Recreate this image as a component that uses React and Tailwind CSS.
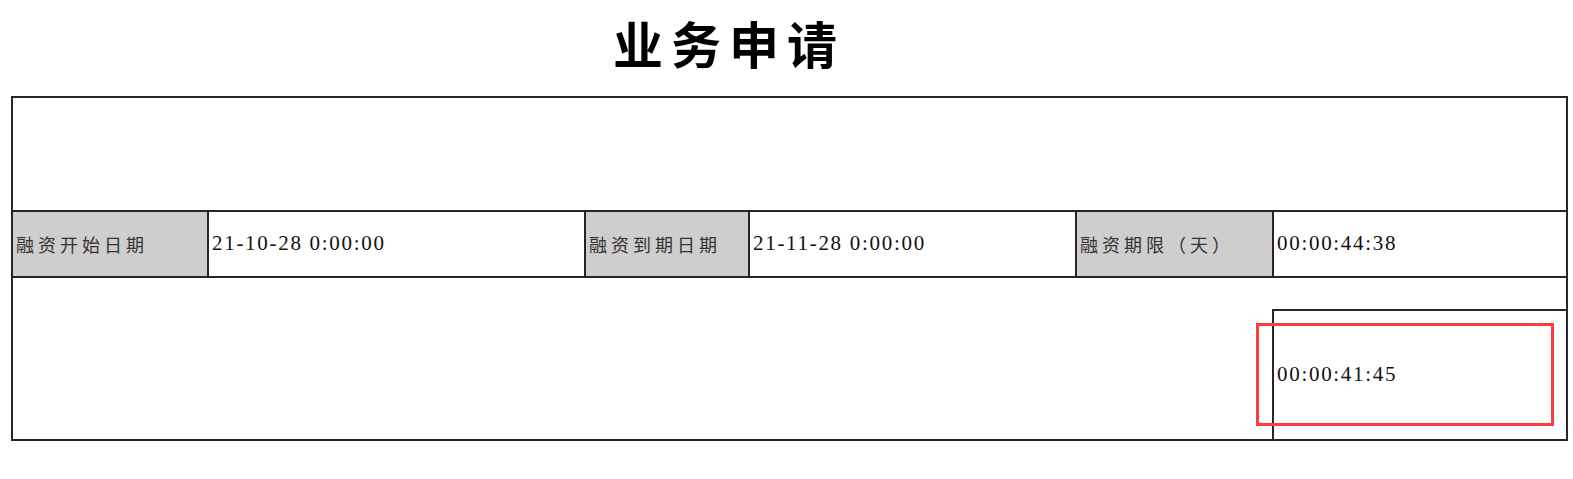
export default function App() {
  const label =
    "h-full flex items-center pl-[3px] bg-[#cfcdcd] text-[18px] tracking-[4px] text-[#333] whitespace-nowrap font-['Noto_Sans_CJK_SC','Noto_Sans',sans-serif]";
  const value =
    "h-full flex items-center pl-[3px] text-[21px] tracking-[1.7px] text-[#111] whitespace-nowrap font-['Liberation_Serif','Noto_Sans_CJK_SC',serif]";
  return (
    <div className="w-[1573px] h-[479px] bg-white relative overflow-hidden">
      <div className="h-[96px] pb-[12px] flex items-center pl-[613px]">
        <h1 className="text-[50px] leading-none font-semibold tracking-[8px] text-black font-['Noto_Sans_CJK_SC',sans-serif]">
          业务申请
        </h1>
      </div>
      <div className="ml-[11px] w-[1557px] h-[345px] border-2 border-[#262626] flex flex-col">
        <div className="h-[114px] border-b-2 border-[#262626]"></div>
        <div className="h-[66px] border-b-2 border-[#262626] flex">
          <div className={`w-[194px] ${label}`}>融资开始日期</div>
          <div className={`w-[377px] border-l-2 border-[#262626] ${value}`}>21-10-28 0:00:00</div>
          <div className={`w-[164px] border-l-2 border-[#262626] ${label}`}>融资到期日期</div>
          <div className={`w-[327px] border-l-2 border-[#262626] ${value}`}>21-11-28 0:00:00</div>
          <div className={`w-[197px] border-l-2 border-[#262626] ${label}`}>融资期限（天）</div>
          <div className={`flex-1 border-l-2 border-[#262626] ${value}`}>00:00:44:38</div>
        </div>
        <div className="flex-1 flex flex-col">
          <div className="h-[31px]"></div>
          <div className="flex-1 flex">
            <div className="w-[1259px]"></div>
            <div className={`flex-1 border-l-2 border-t-2 border-[#262626] ${value}`}>00:00:41:45</div>
          </div>
        </div>
      </div>
      <div className="absolute left-[1256px] top-[323px] w-[298px] h-[103px] border-[3px] border-[#ff3b3b]"></div>
    </div>
  );
}
